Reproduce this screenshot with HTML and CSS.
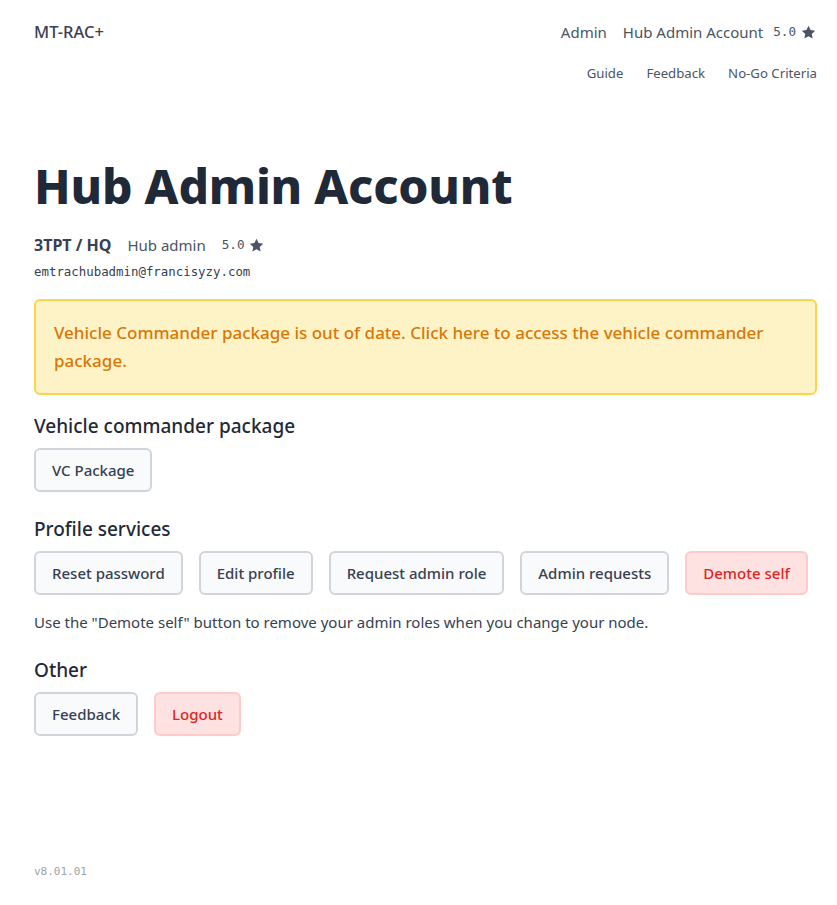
FILE: index.html
```html
<!DOCTYPE html>
<html>
<head>
<meta charset="utf-8">
<link rel="stylesheet" href="styles.css">
</head>
<body>
<div class="page">
  <header class="topbar">
    <div class="brand">MT-RAC+</div>
    <div class="topright">
      <nav class="nav-main">
        <a>Admin</a>
        <a>Hub Admin Account</a>
        <span class="rating"><span class="mono">5.0</span><svg class="star" viewBox="0 0 24 24"><path d="M12 2.5l2.9 6.1 6.6.8-4.9 4.6 1.3 6.6L12 17.3l-5.9 3.3 1.3-6.6-4.9-4.6 6.6-.8z"/></svg></span>
      </nav>
      <nav class="nav-sub">
        <a>Guide</a>
        <a>Feedback</a>
        <a>No-Go Criteria</a>
      </nav>
    </div>
  </header>

  <main class="content">
    <h1 class="title">Hub Admin Account</h1>
    <div class="meta">
      <span class="unit">3TPT / HQ</span>
      <span class="role">Hub admin</span>
      <span class="rating"><span class="mono">5.0</span><svg class="star" viewBox="0 0 24 24"><path d="M12 2.5l2.9 6.1 6.6.8-4.9 4.6 1.3 6.6L12 17.3l-5.9 3.3 1.3-6.6-4.9-4.6 6.6-.8z"/></svg></span>
    </div>
    <div class="email">emtrachubadmin@francisyzy.com</div>

    <div class="alert">Vehicle Commander package is out of date. Click here to access the vehicle commander package.</div>

    <section class="section">
      <h2 class="section-title">Vehicle commander package</h2>
      <div class="btn-row">
        <button class="btn">VC Package</button>
      </div>
    </section>

    <section class="section">
      <h2 class="section-title">Profile services</h2>
      <div class="btn-row">
        <button class="btn">Reset password</button>
        <button class="btn">Edit profile</button>
        <button class="btn">Request admin role</button>
        <button class="btn">Admin requests</button>
        <button class="btn btn-danger">Demote self</button>
      </div>
      <p class="note">Use the "Demote self" button to remove your admin roles when you change your node.</p>
    </section>

    <section class="section">
      <h2 class="section-title">Other</h2>
      <div class="btn-row">
        <button class="btn">Feedback</button>
        <button class="btn btn-danger">Logout</button>
      </div>
    </section>
  </main>

  <footer class="footer">v8.01.01</footer>
</div>
</body>
</html>
```

FILE: styles.css
```css
* { box-sizing: border-box; }
html, body { margin: 0; padding: 0; background: #fff; }
body {
  font-family: "Noto Sans", "Open Sans", sans-serif;
  color: #374151;
}
.page {
  padding: 0 20px 0 34px;
  min-height: 905px;
  display: flex;
  flex-direction: column;
}
.mono { font-family: "DejaVu Sans Mono", "Liberation Mono", monospace; }
.topbar {
  display: flex;
  justify-content: space-between;
  align-items: flex-start;
  padding-top: 21px;
}
.brand {
  font-size: 16.5px;
  font-weight: 500;
  color: #374151;
  line-height: 22px;
}
.topright {
  display: flex;
  flex-direction: column;
  align-items: flex-end;
}
.nav-main {
  display: flex;
  align-items: center;
  gap: 16px;
  font-size: 15px;
  color: #4b5563;
  line-height: 22px;
}
.nav-sub {
  display: flex;
  gap: 23px;
  margin-top: 20px;
  font-size: 13.2px;
  color: #4b5563;
  line-height: 20px;
}
.rating {
  display: inline-flex;
  align-items: center;
  gap: 4px;
  color: #4b5563;
}
.rating .mono { font-size: 12.6px; }
.star { width: 17px; height: 17px; fill: #4b5563; }
.nav-main .rating { margin-left: -6px; }

.content { padding-top: 73px; }
.title {
  margin: 0;
  font-size: 48px;
  font-weight: 800;
  color: #1f2937;
  line-height: 60px;
  letter-spacing: -0.2px;
}
.meta {
  display: flex;
  align-items: center;
  gap: 16px;
  margin-top: 18px;
  line-height: 22px;
}
.unit { font-size: 16px; font-weight: 700; color: #374151; }
.role { font-size: 15px; color: #4b5563; }
.meta .rating { gap: 3px; }
.meta .rating .mono { font-size: 12.6px; }
.email {
  font-family: "DejaVu Sans Mono", "Liberation Mono", monospace;
  font-size: 12.4px;
  color: #374151;
  margin-top: 7px;
  line-height: 18px;
}
.alert {
  margin-top: 18px;
  background: #fef3c7;
  border: 2px solid #fcd34d;
  border-radius: 6px;
  padding: 18px 18px;
  color: #d97706;
  font-size: 17px;
  font-weight: 500;
  line-height: 28px;
}
.section { margin-top: 18px; }
.section + .section { margin-top: 24px; }
.section-title {
  margin: 0 0 9px;
  font-size: 19px;
  font-weight: 500;
  color: #1f2937;
  line-height: 26px;
}
.btn-row {
  display: flex;
  gap: 16px;
  flex-wrap: wrap;
}
.btn {
  font-family: inherit;
  font-size: 15px;
  font-weight: 500;
  color: #374151;
  background: #f9fafb;
  border: 2px solid #d1d5db;
  border-radius: 6px;
  height: 44px;
  padding: 0 16px;
  line-height: 20px;
}
.btn-danger {
  background: #fee2e2;
  border-color: #fecaca;
  color: #dc2626;
}
.note {
  margin: 16px 0 0;
  font-size: 15px;
  line-height: 22px;
  color: #374151;
}
.section:last-child { margin-top: 24px; }
.footer {
  margin-top: auto;
  padding-bottom: 27px;
  font-family: "DejaVu Sans Mono", "Liberation Mono", monospace;
  font-size: 11px;
  color: #9ca3af;
}
```
